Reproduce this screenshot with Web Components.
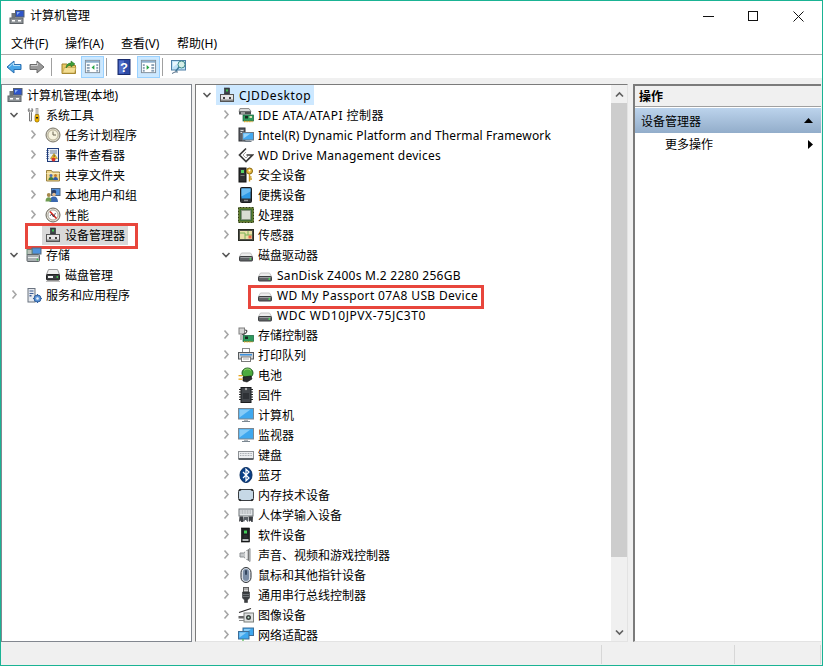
<!DOCTYPE html>
<html lang="zh">
<head>
<meta charset="utf-8">
<title>计算机管理</title>
<style>
  html, body { margin: 0; padding: 0; height: 100%; background: #fff; }
  body {
    font-family: "Noto Sans", "Noto Sans CJK SC", sans-serif;
    font-size: 12px;
    color: #000;
    overflow: hidden;
  }
</style>
</head>
<body>
<mgmt-window>
  <title-bar slot="top" text="计算机管理"></title-bar>
  <menu-bar slot="top"></menu-bar>
  <tool-bar slot="top"></tool-bar>

  <tree-pane slot="left" style="--base:-14px">
    <tree-row level="0" state="none" icon="mgmt" text="计算机管理(本地)"></tree-row>
    <tree-row level="1" state="open" icon="tools" text="系统工具"></tree-row>
    <tree-row level="2" state="closed" icon="clock" text="任务计划程序"></tree-row>
    <tree-row level="2" state="closed" icon="event" text="事件查看器"></tree-row>
    <tree-row level="2" state="closed" icon="share" text="共享文件夹"></tree-row>
    <tree-row level="2" state="closed" icon="users" text="本地用户和组"></tree-row>
    <tree-row level="2" state="closed" icon="perf" text="性能"></tree-row>
    <tree-row level="2" state="none" icon="devmgr" text="设备管理器" selected="gray">
      <red-mark style="left:23px;top:-2px;width:113px;height:26px"></red-mark>
    </tree-row>
    <tree-row level="1" state="open" icon="storage" text="存储"></tree-row>
    <tree-row level="2" state="none" icon="diskmgr" text="磁盘管理"></tree-row>
    <tree-row level="1" state="closed" icon="services" text="服务和应用程序"></tree-row>
  </tree-pane>

  <tree-pane slot="center" scroll style="--base:4px">
    <tree-row level="0" state="open" icon="devmgr" text="CJDDesktop" selected="blue" style="--track:.6px"></tree-row>
    <tree-row level="1" state="closed" icon="ide" text="IDE ATA/ATAPI 控制器" style="--track:.45px"></tree-row>
    <tree-row level="1" state="closed" icon="pcdisplay" text="Intel(R) Dynamic Platform and Thermal Framework" style="--track:.15px"></tree-row>
    <tree-row level="1" state="closed" icon="wd" text="WD Drive Management devices" style="--track:.26px"></tree-row>
    <tree-row level="1" state="closed" icon="security" text="安全设备"></tree-row>
    <tree-row level="1" state="closed" icon="portable" text="便携设备"></tree-row>
    <tree-row level="1" state="closed" icon="cpu" text="处理器"></tree-row>
    <tree-row level="1" state="closed" icon="sensor" text="传感器"></tree-row>
    <tree-row level="1" state="open" icon="disk" text="磁盘驱动器"></tree-row>
    <tree-row level="2" state="none" icon="disk" text="SanDisk Z400s M.2 2280 256GB" style="--track:.28px"></tree-row>
    <tree-row level="2" state="none" icon="disk" text="WD My Passport 07A8 USB Device" style="--track:.36px">
      <red-mark style="left:52px;top:0;width:236px;height:24px"></red-mark>
    </tree-row>
    <tree-row level="2" state="none" icon="disk" text="WDC WD10JPVX-75JC3T0" style="--track:.55px"></tree-row>
    <tree-row level="1" state="closed" icon="storagectl" text="存储控制器"></tree-row>
    <tree-row level="1" state="closed" icon="printer" text="打印队列"></tree-row>
    <tree-row level="1" state="closed" icon="battery" text="电池"></tree-row>
    <tree-row level="1" state="closed" icon="firmware" text="固件"></tree-row>
    <tree-row level="1" state="closed" icon="monitor" text="计算机"></tree-row>
    <tree-row level="1" state="closed" icon="monitor" text="监视器"></tree-row>
    <tree-row level="1" state="closed" icon="keyboard" text="键盘"></tree-row>
    <tree-row level="1" state="closed" icon="bluetooth" text="蓝牙"></tree-row>
    <tree-row level="1" state="closed" icon="memory" text="内存技术设备"></tree-row>
    <tree-row level="1" state="closed" icon="hid" text="人体学输入设备"></tree-row>
    <tree-row level="1" state="closed" icon="software" text="软件设备"></tree-row>
    <tree-row level="1" state="closed" icon="sound" text="声音、视频和游戏控制器"></tree-row>
    <tree-row level="1" state="closed" icon="mouse" text="鼠标和其他指针设备"></tree-row>
    <tree-row level="1" state="closed" icon="usb" text="通用串行总线控制器"></tree-row>
    <tree-row level="1" state="closed" icon="camera" text="图像设备"></tree-row>
    <tree-row level="1" state="closed" icon="network" text="网络适配器"></tree-row>
  </tree-pane>

  <action-pane slot="right"></action-pane>
  <status-bar slot="bottom"></status-bar>
</mgmt-window>

<script>
// 16x16 icon bodies
const ICONS = {
  mgmt: `<rect x="1" y="9" width="13" height="5.500" fill="#8d9296" stroke="#5f6468"/><rect x="3" y="11" width="3" height="1.500" fill="#fff"/><rect x="9" y="11" width="3" height="1.500" fill="#fff"/><rect x="6.500" y="1.500" width="8.500" height="6.500" fill="#2f55c8" stroke="#55606e"/><path d="M8 3h3l-3 3z" fill="#8fb4f0"/><rect x="2.500" y="4" width="3.500" height="5" fill="#6f7478"/><rect x="9" y="8" width="3" height="1" fill="#888"/>`,
  tools: `<path d="M3 1.500c-1 1-1 3 .5 4v8.500h2V5.500c1.500-1 1.500-3 .5-4v2.500H3z" fill="#f1f1f1" stroke="#777"/><rect x="10" y="1.500" width="2" height="6" fill="#d8d8d8" stroke="#888" stroke-width=".6"/><path d="M9.500 7.500h3l.5 2v4.500l-1 1h-2l-1-1V9.500z" fill="#f0b400" stroke="#7a5a00" stroke-width=".6"/><rect x="10" y="10" width="2" height="1.500" fill="#222"/>`,
  clock: `<circle cx="8" cy="8" r="7" fill="#d9d6c8" stroke="#7b7668"/><circle cx="8" cy="8" r="5" fill="#f7f3df" stroke="#a89f80" stroke-width=".7"/><path d="M8 4.500V8h3" fill="none" stroke="#6a6450" stroke-width="1"/>`,
  event: `<rect x="2.500" y="1.500" width="11" height="13" fill="#e8eef6" stroke="#1f3c7a"/><path d="M2.500 3v10" stroke="#1f3c7a" stroke-width="2" stroke-dasharray="1 1"/><path d="M5 4h7M5 6h7" stroke="#6e7f99"/><path d="M9 6.500l3.500 5h-7z" fill="#f2c230" stroke="#8a6a00" stroke-width=".5"/><circle cx="8.500" cy="12.500" r="2" fill="#d8362c"/><rect x="8.700" y="8" width=".8" height="2" fill="#333"/>`,
  share: `<path d="M1.500 3.500h5l1 1.500h7v9h-13z" fill="#efd68d" stroke="#9a8240"/><path d="M1.500 6.500h13" stroke="#f8eab8"/><circle cx="6" cy="8.500" r="1.500" fill="#4a6fb5"/><path d="M3.500 13c0-2 1-3 2.500-3s2.500 1 2.500 3z" fill="#3f7d3f"/><circle cx="10.500" cy="8.500" r="1.500" fill="#c27b2e"/><path d="M8 13c0-2 1-3 2.500-3s2.500 1 2.500 3z" fill="#2f5aa8"/>`,
  users: `<rect x="6.500" y="1.500" width="8.500" height="7" fill="#4f8fdc" stroke="#51647a"/><circle cx="9" cy="5" r="2.300" fill="#2a3f6a"/><path d="M4.500 15c0-3.500 2-5.500 4.500-5.500s4 2 4 5.500z" fill="#3a68b0"/><circle cx="3.800" cy="8" r="2" fill="#a7894c"/><path d="M.5 14.500c0-3 1.300-4.300 3.300-4.300s2.500 1.300 2.500 4.300z" fill="#6f9b52"/><circle cx="9" cy="7.500" r="1.800" fill="#e3b98c"/>`,
  perf: `<circle cx="8" cy="8" r="7" fill="#e4e1d6" stroke="#6c675c"/><circle cx="8" cy="8" r="5" fill="#fff" stroke="#9b968a" stroke-width=".8"/><path d="M5 4.500l6.500 7" stroke="#d8261c" stroke-width="1.500"/><path d="M5 9l1.500-2 2 3 2-4" fill="none" stroke="#223" stroke-width=".7"/>`,
  devmgr: `<rect x="5.500" y="1" width="5" height="6" fill="#3f444a" stroke="#24272a" stroke-width=".6"/><rect x="7" y="2.500" width="2" height="2" fill="#39c24b"/><rect x="1.500" y="7.500" width="13" height="7" fill="#e5e5e5" stroke="#555"/><rect x="2" y="12.500" width="12" height="1.500" fill="#8a8a8a"/><rect x="4" y="10" width="2" height="2" fill="#444"/><rect x="10" y="10" width="2" height="2" fill="#444"/>`,
  storage: `<rect x="6" y="1" width="9" height="6" fill="#4e93dd" stroke="#5a6b7d"/><rect x="1" y="2.500" width="5" height="5" fill="#b8c0b8" stroke="#687"/><rect x="1" y="7.500" width="12.500" height="7" rx="1" fill="#a9afb2" stroke="#60666a"/><path d="M2 10.500h10" stroke="#e8eaeb"/><circle cx="11.500" cy="12.500" r=".9" fill="#3ec04a"/>`,
  diskmgr: `<path d="M3.500 2.500h9l2 5h-13z" fill="#efefef" stroke="#9a9a9a"/><rect x="1.500" y="7.500" width="13" height="5.500" rx=".8" fill="#3a3d40" stroke="#222"/><rect x="3" y="9" width="5" height="2" fill="#f4f4f4"/><circle cx="12.300" cy="10" r=".9" fill="#45d052"/><path d="M1 14.500h14" stroke="#bdbdbd"/>`,
  services: `<rect x="2" y="1.500" width="7" height="13.500" fill="#e6e9ee" stroke="#69727f"/><path d="M3.500 4h4M3.500 6.500h4" stroke="#3e5f96"/><rect x="3.500" y="8" width="2" height="1.500" fill="#3e5f96"/><circle cx="11.500" cy="11.500" r="3.500" fill="#5b93d6" stroke="#2f5f9e"/><circle cx="11.500" cy="11.500" r="1.300" fill="#e8f1fb"/><path d="M11.500 7v1.500M11.500 14.500V16M7 11.500h1.500M14.500 11.500H16" stroke="#2f5f9e"/>`,
  ide: `<path d="M2 1.500h9l2 3H1z" fill="#d8d8d8" stroke="#8f8f8f"/><rect x="1" y="4.500" width="12" height="3" fill="#4b4e50"/><rect x="3" y="5.500" width="4" height="1" fill="#eee"/><rect x="5" y="8" width="10.500" height="6" fill="#2f9a5c" stroke="#12603a" stroke-width=".7"/><rect x="7" y="9" width="3" height="2.500" fill="#172a22"/><rect x="11.500" y="9" width="2.500" height="2" fill="#d8dfb2"/><path d="M6 14.500h8.500" stroke="#e8a820" stroke-width="1.400" stroke-dasharray="1 .6"/>`,
  pcdisplay: `<rect x="1" y="1" width="6" height="13" fill="#5f6368" stroke="#2a2d30"/><rect x="2.500" y="3" width="3" height="1" fill="#ddd"/><rect x="2.500" y="5" width="3" height="1" fill="#ddd"/><rect x="4.500" y="5.500" width="11" height="7.500" fill="#45a9f0" stroke="#6f7a85"/><path d="M5.500 6.500h7l-7 5z" fill="#9ad5fa"/><rect x="8" y="13" width="4" height="1" fill="#99a2aa"/><rect x="6.500" y="14" width="7" height="1" fill="#6f7a85"/>`,
  wd: `<path d="M8 1.500 1.500 8 8 14.500l6.500-6.500h-6" fill="none" stroke="#3a3a3a" stroke-width="1.700"/><path d="M8 5 5 8l3 3 2-2" fill="none" stroke="#8a8a8a" stroke-width=".8"/>`,
  security: `<rect x="1" y="1" width="7" height="14" fill="#2d3033" stroke="#111"/><rect x="3" y="3" width="3" height="3" fill="#52d060"/><rect x="2.500" y="8" width="4" height="1" fill="#777"/><circle cx="11.500" cy="4" r="3" fill="#e8b83c" stroke="#8a6a14"/><circle cx="11.500" cy="3.500" r="1" fill="#fff"/><path d="M11.500 7v7.500M11.500 12h2.500M11.500 10h2" stroke="#c89a22" stroke-width="1.400"/>`,
  portable: `<rect x="2.500" y="0.500" width="11" height="15" rx="1" fill="#2f3338" stroke="#1a1c1f"/><rect x="3.500" y="1.500" width="9" height="10" fill="#2e9be8"/><path d="M3.500 1.500h9v3l-9 5z" fill="#6cbdf2"/><rect x="6" y="12.800" width="4" height="1.400" fill="#8a8e92"/>`,
  cpu: `<rect x="0.500" y="0.500" width="15" height="15" fill="#5d7a2a" stroke="#2e3f10" stroke-dasharray="1 .5"/><rect x="2" y="2" width="12" height="12" fill="#3f6c38"/><rect x="3.500" y="3.500" width="9" height="9" fill="#d8dcd2" stroke="#8a8e80" stroke-width=".6"/>`,
  sensor: `<rect x="0.500" y="2.500" width="15" height="11" fill="#4f5148" stroke="#2a2c24"/><rect x="2" y="4" width="12" height="8" fill="#e9dfa8"/><path d="M2 6h5v6M7 8h7M10 4v4" stroke="#7db458" stroke-width="1" fill="none"/><rect x="10.500" y="8.500" width="3" height="3" fill="#e86a4a"/>`,
  disk: `<path d="M3.500 6h9l2 3.500h-13z" fill="#ededed" stroke="#c4c4c4"/><rect x="1.500" y="9.500" width="13" height="4.500" rx=".8" fill="#606366" stroke="#3d3f41"/><path d="M2.500 10.500h11" stroke="#9a9d9f"/><circle cx="12.300" cy="12" r=".9" fill="#4cd65a"/>`,
  storagectl: `<rect x="1" y="1" width="5.500" height="6" fill="#d5d5d5" stroke="#7e7e7e"/><path d="M7 3c3 0 2 3 -1 4s-3 3 0 3" fill="none" stroke="#4a4a4a" stroke-width="1.200"/><rect x="5" y="8.500" width="10.500" height="6" fill="#2f9a5c" stroke="#12603a" stroke-width=".7"/><rect x="7" y="9.500" width="3" height="2.500" fill="#172a22"/><path d="M6 14.800h8.500" stroke="#e8a820" stroke-width="1.200" stroke-dasharray="1 .6"/><rect x="2" y="8" width="3" height="5" fill="#bbb"/>`,
  printer: `<rect x="4.500" y="1.500" width="7" height="4" fill="#fff" stroke="#8a8a8a"/><rect x="0.500" y="5.500" width="15" height="6.500" fill="#cdd0d2" stroke="#55595c"/><rect x="2" y="7" width="12" height="1.500" fill="#3b8fdc"/><rect x="3.500" y="10" width="9" height="4.500" fill="#fff" stroke="#7a7a7a"/><path d="M5 12h6" stroke="#aaa"/>`,
  battery: `<ellipse cx="9.500" cy="6" rx="5.500" ry="5" fill="#4dab3e" stroke="#1f5a20"/><path d="M6 3.500c2-2 5-2 7 0" stroke="#a6e07c" fill="none"/><path d="M5 10l8-1 1 3-5 3-4-1z" fill="#2a2d2f" stroke="#111" stroke-width=".6"/><rect x="0.500" y="8" width="4" height="1.300" fill="#e7a51c"/><rect x="0.500" y="11.500" width="4" height="1.300" fill="#e7a51c"/>`,
  firmware: `<path d="M1 2.500h14M1 5h14M1 7.500h14M1 10h14M1 12.500h14" stroke="#222" stroke-width="1"/><rect x="3" y="0.500" width="10" height="15" fill="#41454a" stroke="#1a1c1f"/><circle cx="8" cy="2" r="1.200" fill="#aaa"/><rect x="5" y="6" width="6" height="6" fill="#2e3136"/>`,
  monitor: `<rect x="0.500" y="1.500" width="15" height="10.500" fill="#3fa8ef" stroke="#7b8791"/><path d="M1.500 2.500h11l-11 8z" fill="#86cbf7"/><rect x="6" y="12.500" width="4" height="1.500" fill="#aeb5bb"/><rect x="4" y="14" width="8" height="1" fill="#7b8791"/>`,
  keyboard: `<rect x="0.500" y="4.500" width="15" height="7" fill="#eceef0" stroke="#8c9094"/><path d="M2 6.500h12M2 8.500h12" stroke="#a8adb2" stroke-dasharray="1 .6"/><rect x="0.500" y="11" width="15" height="2" fill="#5e6367"/>`,
  bluetooth: `<ellipse cx="8" cy="8" rx="6" ry="7.500" fill="#0a3f86" stroke="#062a5c"/><path d="M5 5l6 6-3 2.800V2.200L11 5 5 11" fill="none" stroke="#fff" stroke-width="1.200"/>`,
  memory: `<rect x="0.500" y="2.500" width="15" height="11" rx="2" fill="#c6d8e6" stroke="#3a3d40" stroke-width="1"/><path d="M1 3.500l2-1M15 3.500l-2-1M1 12.500l2 1M15 12.500l-2 1" stroke="#222" stroke-width="1.400"/>`,
  hid: `<rect x="1" y="2" width="14" height="7" fill="#e2e5e8" stroke="#6b7075"/><path d="M2.500 4h11M2.500 6h11" stroke="#8e9398" stroke-dasharray="1 .6"/><path d="M1.500 9.500h3.500v5.500H3l-.5-1.500-1.500 1.500zM10.500 9.500H15l-.3 5.500h-1.200l-1-1.500-1.500 1.500z" fill="#3a3d42"/><path d="M5.500 10h4.500l.3 4-.8 1-1.500-2h-1L6 15l-1-1z" fill="#5a5f66"/>`,
  software: `<rect x="3.500" y="1" width="8" height="14" fill="#1f2123" stroke="#000" stroke-width=".6"/><rect x="6" y="3.500" width="3" height="3" fill="#43cc58"/><rect x="4.500" y="12" width="6" height="2" fill="#b9bdbe"/><rect x="5.500" y="8" width="4" height="3" fill="#2b2d30"/>`,
  sound: `<path d="M2 6h3.500L12 1.500v13L5.500 10H2z" fill="#c6c9cb" stroke="#8a8e91"/><path d="M8 4v8" stroke="#eee" stroke-width="2"/><path d="M10.500 3v10" stroke="#777"/>`,
  mouse: `<rect x="3" y="0.500" width="10" height="15" rx="5" fill="#d7dde4" stroke="#2f3338" stroke-width="1"/><rect x="5" y="2" width="6" height="12" rx="3" fill="#7a8da6"/><rect x="7" y="3" width="2" height="5" rx="1" fill="#34465e"/>`,
  usb: `<rect x="5.500" y="0.500" width="5" height="4.500" fill="#d6d6d6" stroke="#5c5c5c"/><rect x="6.500" y="1.500" width="1" height="1" fill="#333"/><rect x="8.500" y="1.500" width="1" height="1" fill="#333"/><path d="M4.500 5h7v6l-2 2v2.500h-3V13l-2-2z" fill="#3a3d40" stroke="#26282a" stroke-width=".5"/><path d="M5 7.500h6M5 9.500h6" stroke="#6e7377"/>`,
  camera: `<path d="M1 5.500l12-4" stroke="#2a2a2a" stroke-width="1.300"/><path d="M.5 9H6v2.500H.5z" fill="#686868"/><rect x="6" y="6" width="9.500" height="9" fill="#dfe1e0" stroke="#7a7e7a"/><circle cx="10.500" cy="10.500" r="2.500" fill="#3a3f3c"/><circle cx="10.500" cy="10.500" r="1" fill="#bfe3cc"/><rect x="1" y="13" width="5" height="1" fill="#8a8a8a"/>`,
  network: `<rect x="5" y="1" width="10.500" height="7.500" fill="#3fa8ef" stroke="#3e6e98"/><path d="M6 2h7L6 7z" fill="#8bcdf8"/><rect x="0.500" y="4.500" width="10.500" height="7.500" fill="#3fa8ef" stroke="#3e6e98"/><path d="M1.500 5.500h7l-7 5z" fill="#8bcdf8"/><path d="M5 12v3M2 15h13" stroke="#4cb84c" stroke-width="1.200"/>`,
  // toolbar
  back: `<path d="M1 8l7-6v3.500h7v5H8V14z" fill="#4aa6e8" stroke="#2b6fb0"/><path d="M3 8l4.500-4v2.500H14" fill="none" stroke="#b4e0fb"/>`,
  forward: `<path d="M15 8L8 2v3.500H1v5h7V14z" fill="#9a9a9a" stroke="#6c6c6c"/><path d="M2 6.500h6.500V4" fill="none" stroke="#cfcfcf"/>`,
  up: `<path d="M1 5h5l1 1.500h7.500v8H1z" fill="#e9c866" stroke="#a3842c"/><path d="M1.500 14l2-5.500h11.500l-1.500 5.500z" fill="#f3dd92" stroke="#b89a44" stroke-width=".6"/><path d="M5 9c0-3 2-5 5-5V2l4 3-4 3V6c-2 0-3 1-5 3z" fill="#3f9f3a" stroke="#22691f" stroke-width=".5"/>`,
  help: `<rect x="2" y="0.500" width="12" height="15" fill="#2d4aa5" stroke="#1a2c6e"/><path d="M3 1.500h5v13H3z" fill="#4f6cc8"/><text x="8" y="13" font-family="Liberation Sans, sans-serif" font-size="13" font-weight="700" text-anchor="middle" fill="#fff">?</text>`,
  hideTree: `<rect x="1.500" y="2.500" width="15" height="13" fill="#fff" stroke="#7f8c98"/><rect x="2" y="3" width="14" height="2" fill="#8fb0cc"/><rect x="3" y="6.500" width="3" height="2" fill="#8aa0b5"/><rect x="3" y="9.500" width="3" height="2" fill="#8aa0b5"/><rect x="3" y="12.500" width="3" height="2" fill="#8aa0b5"/><rect x="13" y="6.500" width="2" height="2" fill="#8aa0b5"/><rect x="13" y="9.500" width="2" height="2" fill="#8aa0b5"/><rect x="13" y="12.500" width="2" height="2" fill="#8aa0b5"/><path d="M11 7.500v5l-3-2.500z" fill="#2aa544"/>`,
  showPane: `<rect x="1.500" y="2.500" width="15" height="13" fill="#fff" stroke="#7f8c98"/><rect x="2" y="3" width="14" height="2" fill="#8fb0cc"/><rect x="3" y="6.500" width="2" height="2" fill="#8aa0b5"/><rect x="3" y="9.500" width="2" height="2" fill="#8aa0b5"/><rect x="3" y="12.500" width="2" height="2" fill="#8aa0b5"/><rect x="12" y="6.500" width="3" height="2" fill="#8aa0b5"/><rect x="12" y="9.500" width="3" height="2" fill="#8aa0b5"/><rect x="12" y="12.500" width="3" height="2" fill="#8aa0b5"/><path d="M7 7.500v5l3-2.500z" fill="#2aa544"/>`,
  scan: `<rect x="0.500" y="1.500" width="14" height="9.500" fill="#bfe2f7" stroke="#4d7ea6"/><path d="M2 3h7l-7 5z" fill="#e8f6fd"/><path d="M5 11v2M1 14.500l3-1.500h3" stroke="#54708a" fill="none"/><circle cx="10.500" cy="5.500" r="3.500" fill="#dff3e0" fill-opacity=".7" stroke="#3c8a8a"/><path d="M8 8l-3 4" stroke="#3c7a9a" stroke-width="1.400"/>`
};

class AppIcon extends HTMLElement {
  connectedCallback() {
    const size = this.getAttribute('size') || 16;
    const box = this.getAttribute('box') || 16;
    this.attachShadow({ mode: 'open' }).innerHTML = `
<style>
  :host { display: inline-flex; width: ${size}px; height: ${size}px; flex: none; }
  svg { display: block; }
</style>
<svg width="${size}" height="${size}" viewBox="0 0 ${box} ${box}">${ICONS[this.getAttribute('name')] || ''}</svg>`;
  }
}

class MgmtWindow extends HTMLElement {
  constructor() {
    super();
    this.attachShadow({ mode: 'open' }).innerHTML = `
<style>
  :host {
    display: flex;
    flex-direction: column;
    box-sizing: border-box;
    width: 823px;
    height: 666px;
    border: 1px solid #1ab394;
    background: #f0f0f0;
  }
  .top { display: block; background: #fff; flex: none; }
  .panes {
    display: flex;
    flex: 1;
    min-height: 0;
    padding-top: 6px;
    padding-right: 1px;
  }
  .left { display: flex; width: 191px; flex: none; }
  .center { display: flex; flex: 1; min-width: 0; margin-left: 3px; }
  .right { display: flex; width: 188px; flex: none; margin-left: 5px; }
</style>
<div class="top"><slot name="top"></slot></div>
<div class="panes">
  <div class="left"><slot name="left"></slot></div>
  <div class="center"><slot name="center"></slot></div>
  <div class="right"><slot name="right"></slot></div>
</div>
<slot name="bottom"></slot>`;
  }
}

class TitleBar extends HTMLElement {
  connectedCallback() {
    this.attachShadow({ mode: 'open' }).innerHTML = `
<style>
  :host { display: flex; align-items: center; height: 31px; padding-left: 8px; }
  span { margin-left: 5px; padding-bottom: 2px; color: #000; line-height: 28px; }
  .controls { display: flex; margin-left: auto; padding-right: 1px; }
  .controls div { display: flex; width: 45px; height: 29px; align-items: center; justify-content: center; }
  .controls svg { display: block; }
</style>
<app-icon name="mgmt"></app-icon>
<span>${this.getAttribute('text')}</span>
<div class="controls">
  <div><svg width="11" height="11"><path d="M0 5.500h11" stroke="#111"/></svg></div>
  <div><svg width="11" height="11"><rect x=".5" y=".5" width="9" height="9" fill="none" stroke="#111"/></svg></div>
  <div><svg width="11" height="11"><path d="M.5 .5l10 10M10.500 .5l-10 10" stroke="#111"/></svg></div>
</div>`;
  }
}

class MenuBar extends HTMLElement {
  connectedCallback() {
    const items = [['文件(F)', 38], ['操作(A)', 40], ['查看(V)', 40], ['帮助(H)', 41]];
    this.attachShadow({ mode: 'open' }).innerHTML = `
<style>
  :host {
    display: flex;
    gap: 16px;
    height: 22px;
    align-items: center;
    padding-left: 10px;
    border-bottom: 1px solid #ababab;
    color: #000;
  }
  span { line-height: 22px; padding-top: 2px; white-space: nowrap; }
</style>
${items.map(([text, width]) => `<span style="width:${width}px">${text}</span>`).join('')}`;
  }
}

class ToolBar extends HTMLElement {
  connectedCallback() {
    this.attachShadow({ mode: 'open' }).innerHTML = `
<style>
  :host {
    display: flex;
    height: 23px;
    align-items: center;
    padding-left: 5px;
    box-sizing: border-box;
  }
  .btn { display: flex; align-items: center; justify-content: center; }
  .on {
    box-sizing: border-box;
    width: 23px;
    height: 22px;
    background: #cce8ff;
    border: 1px solid #99d1ff;
  }
  .sep { width: 1px; height: 18px; background: #a0a0a0; }
</style>
<app-icon name="back"></app-icon>
<app-icon name="forward" style="margin-left:7px"></app-icon>
<div class="sep" style="margin-left:6px"></div>
<app-icon name="up" style="margin-left:9px"></app-icon>
<div class="btn on" style="margin-left:4px"><app-icon name="hideTree" size="17" box="18"></app-icon></div>
<div class="sep" style="margin-left:2px"></div>
<app-icon name="help" style="margin-left:9px"></app-icon>
<div class="btn on" style="margin-left:5px"><app-icon name="showPane" size="17" box="18"></app-icon></div>
<div class="sep" style="margin-left:2px"></div>
<app-icon name="scan" style="margin-left:8px"></app-icon>`;
  }
}

class TreePane extends HTMLElement {
  constructor() {
    super();
    this.attachShadow({ mode: 'open' }).innerHTML = `
<style>
  :host {
    display: flex;
    flex: 1;
    min-width: 0;
    box-sizing: border-box;
    background: #fff;
    border: 1px solid #82878f;
  }
  :host([scroll]) {
    border-color: #7b7b7b #e3e3e3 #e3e3e3 #7b7b7b;
  }
  .list { flex: 1; min-width: 0; overflow: hidden; }
  .bar {
    display: none;
    flex-direction: column;
    width: 16px;
    flex: none;
    background: #f0f0f0;
  }
  :host([scroll]) .bar { display: flex; }
  .arrow { display: flex; height: 18px; align-items: center; justify-content: center; flex: none; }
  .thumb { height: 454px; background: #cdcdcd; flex: none; }
  .space { flex: 1; }
</style>
<div class="list"><slot></slot></div>
<div class="bar">
  <div class="arrow"><svg width="9" height="7"><path d="M1 5.500l3.500-3.500 3.500 3.500" fill="none" stroke="#606060" stroke-width="1.700"/></svg></div>
  <div class="thumb"></div>
  <div class="space"></div>
  <div class="arrow"><svg width="9" height="7"><path d="M1 1.500l3.500 3.500 3.500-3.500" fill="none" stroke="#606060" stroke-width="1.700"/></svg></div>
</div>`;
  }
}

class TreeRow extends HTMLElement {
  connectedCallback() {
    const level = Number(this.getAttribute('level'));
    const state = this.getAttribute('state');
    let twisty = '';
    if (state === 'open') {
      twisty = '<svg width="16" height="16"><path d="M3.500 6l3.500 3.500 3.500-3.500" fill="none" stroke="#595959" stroke-width="1.600"/></svg>';
    } else if (state === 'closed') {
      twisty = '<svg width="16" height="16"><path d="M5.500 3.500l3.500 4-3.500 4" fill="none" stroke="#a6a6a6" stroke-width="1.600"/></svg>';
    }
    this.attachShadow({ mode: 'open' }).innerHTML = `
<style>
  :host { display: flex; position: relative; height: 20px; align-items: center; white-space: nowrap; }
  .twisty {
    width: 16px;
    height: 16px;
    flex: none;
    margin-left: calc(var(--base) + ${level * 19}px);
  }
  .item { display: flex; align-items: center; height: 20px; padding: 0 3px; gap: 4px; }
  :host([selected="gray"]) .item { background: #d9d9d9; }
  :host([selected="blue"]) .item { background: #cde8ff; }
  span { line-height: 20px; padding-top: 2px; color: #000; letter-spacing: var(--track, 0); }
</style>
<div class="twisty">${twisty}</div>
<div class="item"><app-icon name="${this.getAttribute('icon')}"></app-icon><span>${this.getAttribute('text')}</span></div>
<slot></slot>`;
  }
}

// 스크린샷 위 빨간 표시 상자
class RedMark extends HTMLElement {
  constructor() {
    super();
    this.attachShadow({ mode: 'open' }).innerHTML = `
<style>
  :host {
    position: absolute;
    box-sizing: border-box;
    border: 3px solid #e8463c;
    pointer-events: none;
  }
</style>`;
  }
}

class ActionPane extends HTMLElement {
  constructor() {
    super();
    this.attachShadow({ mode: 'open' }).innerHTML = `
<style>
  :host {
    display: flex;
    flex-direction: column;
    flex: 1;
    box-sizing: border-box;
    background: #fff;
    border-style: solid;
    border-width: 2px 0 1px 2px;
    border-color: #7b7b7b #e3e3e3 #e3e3e3 #7b7b7b;
  }
  .head {
    height: 19px;
    line-height: 19px;
    padding: 1px 0 0 4px;
    background: #f0f0f0;
    border-bottom: 1px solid #a0a0a0;
    font-weight: 700;
    color: #000;
    flex: none;
  }
  .band {
    display: flex;
    align-items: center;
    justify-content: space-between;
    height: 25px;
    margin-top: 1px;
    padding: 0 8px 0 6px;
    background: linear-gradient(#bcd3ec, #92adca);
    color: #000;
    flex: none;
  }
  .row {
    display: flex;
    align-items: center;
    justify-content: space-between;
    height: 22px;
    padding: 0 8px 0 30px;
    color: #000;
  }
  svg { display: block; }
</style>
<div class="head">操作</div>
<div class="band">
  <span>设备管理器</span>
  <svg width="9" height="5"><path d="M4.500 0L9 5H0z" fill="#000"/></svg>
</div>
<div class="row">
  <span>更多操作</span>
  <svg width="5" height="9"><path d="M0 0l5 4.500L0 9z" fill="#000"/></svg>
</div>`;
  }
}

class StatusBar extends HTMLElement {
  constructor() {
    super();
    this.attachShadow({ mode: 'open' }).innerHTML = `
<style>
  :host {
    display: flex;
    height: 23px;
    flex: none;
    background: #f0f0f0;
    box-sizing: border-box;
    padding: 3px 1px 1px 0;
  }
  div { box-sizing: border-box; border-right: 1px solid #d7d7d7; flex: none; }
  .a { flex: 1; }
  .b { width: 133px; }
  .c { width: 86px; }
</style>
<div class="a"></div><div class="b"></div><div class="c"></div>`;
  }
}

customElements.define('app-icon', AppIcon);
customElements.define('mgmt-window', MgmtWindow);
customElements.define('title-bar', TitleBar);
customElements.define('menu-bar', MenuBar);
customElements.define('tool-bar', ToolBar);
customElements.define('tree-pane', TreePane);
customElements.define('tree-row', TreeRow);
customElements.define('red-mark', RedMark);
customElements.define('action-pane', ActionPane);
customElements.define('status-bar', StatusBar);
</script>
</body>
</html>
